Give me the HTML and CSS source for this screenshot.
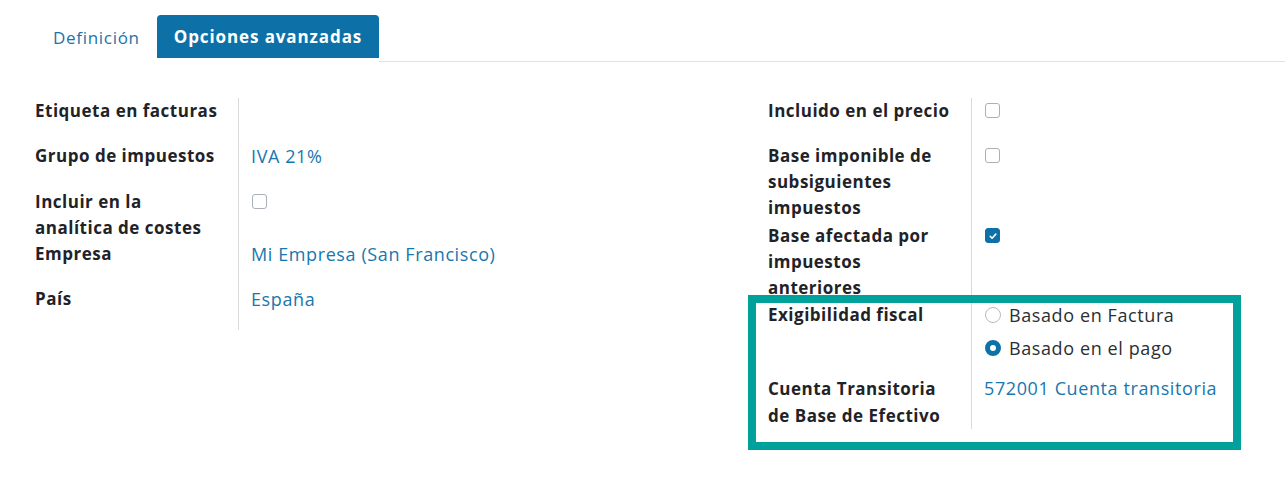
FILE: index.html
```html
<!DOCTYPE html>
<html lang="es">
<head>
<meta charset="utf-8">
<title>Impuesto</title>
<link rel="stylesheet" href="styles.css">
</head>
<body>
<div class="page">
  <nav class="tabs">
    <a class="tab">Definición</a>
    <a class="tab active">Opciones avanzadas</a>
  </nav>
  <div class="groups">
    <div class="group">
      <div class="label pb">Etiqueta en facturas</div>
      <div class="value pb"></div>

      <div class="label pb-20">Grupo de impuestos</div>
      <div class="value pb-20"><span class="link">IVA 21%</span></div>

      <div class="label">Incluir en la analítica de costes</div>
      <div class="value"><span class="check"></span></div>

      <div class="label pb">Empresa</div>
      <div class="value pb"><span class="link">Mi Empresa (San Francisco)</span></div>

      <div class="label pb-last">País</div>
      <div class="value pb-last"><span class="link">España</span></div>
    </div>

    <div class="group">
      <div class="label pb">Incluido en el precio</div>
      <div class="value pb"><span class="check"></span></div>

      <div class="label pb-3">Base imponible de subsiguientes impuestos</div>
      <div class="value pb-3"><span class="check"></span></div>

      <div class="label pb-1">Base afectada por impuestos anteriores</div>
      <div class="value pb-1"><span class="check checked"><svg viewBox="0 0 16 16" width="10" height="10"><path d="M3.5 8.5l3 3 6-6.5" fill="none" stroke="#fff" stroke-width="2.4" stroke-linecap="round" stroke-linejoin="round"/></svg></span></div>

      <div class="label pb-radio">Exigibilidad fiscal</div>
      <div class="value pb-radio">
        <div class="radios">
          <label class="radio-item"><span class="radio"></span>Basado en Factura</label>
          <label class="radio-item"><span class="radio on"></span>Basado en el pago</label>
        </div>
      </div>

      <div class="label tall">Cuenta Transitoria de Base de Efectivo</div>
      <div class="value"><span class="link">572001 Cuenta transitoria</span></div>
    </div>
  </div>
  <div class="highlight"></div>
</div>
</body>
</html>
```

FILE: styles.css
```css
* { box-sizing: border-box; }
html, body { margin: 0; padding: 0; background: #fff; }
body {
  font-family: "Open Sans", "Noto Sans", sans-serif;
  font-size: 16px;
  color: #212529;
}
.page {
  position: relative;
  padding: 15px 0 0 35px;
  width: 1285px;
  height: 481px;
  overflow: hidden;
}
.tabs {
  display: flex;
  border-bottom: 1px solid #dee2e6;
}
.tab {
  display: block;
  height: 47px;
  padding: 11px 17px 0 18px;
  font-size: 17px;
  letter-spacing: 0.7px;
  line-height: 24px;
  color: #1a73a8;
  margin-bottom: -1px;
  border-bottom: 4px solid #fff;
  border-radius: 4px 4px 0 0;
}
.tab.active {
  background: #0d71a7;
  background-clip: padding-box;
  color: #fff;
  font-weight: 700;
  letter-spacing: 0.9px;
  padding: 10px 17px 0 17px;
}
.groups {
  display: grid;
  grid-template-columns: 701px 1fr;
  gap: 32px;
  padding-top: 36px;
}
.group {
  display: grid;
  grid-template-columns: 204px 1fr;
  align-content: start;
}
.label {
  font-weight: 700;
  font-size: 17px;
  letter-spacing: 0.5px;
  line-height: 26px;
  color: #1f2328;
  padding-right: 20px;
  border-right: 1px solid #d8dadd;
}
.label.tall { line-height: 27px; }
.value {
  padding-left: 12px;
  font-size: 18px;
  letter-spacing: 0.6px;
  line-height: 26px;
  color: #374151;
}
.pb { padding-bottom: 19px; }
.pb-20 { padding-bottom: 20px; }
.pb-last { padding-bottom: 18px; }
.pb-3 { padding-bottom: 2px; }
.pb-1 { padding-bottom: 1px; }
.pb-radio { padding-bottom: 14px; }
.link { color: #1877ae; }
.check {
  display: inline-flex;
  align-items: center;
  justify-content: center;
  width: 15px;
  height: 15px;
  margin-top: 5px;
  margin-left: 1px;
  border: 1px solid #a9b0b8;
  border-radius: 3px;
  vertical-align: top;
}
.check.checked {
  background: #0d71a7;
  border-color: #0d71a7;
}
.radios {
  display: flex;
  flex-direction: column;
  gap: 7px;
}
.radio-item {
  display: flex;
  align-items: center;
  gap: 8px;
  color: #2b2f33;
}
.radio {
  display: inline-block;
  width: 16px;
  height: 16px;
  margin-left: 1px;
  border: 1px solid #b5bbc2;
  border-radius: 50%;
}
.radio.on {
  border: 5px solid #0d71a7;
  background: #fff;
}
.highlight {
  position: absolute;
  left: 748px;
  top: 295px;
  width: 493px;
  height: 155px;
  border: 8px solid #00a09b;
  pointer-events: none;
}
```
